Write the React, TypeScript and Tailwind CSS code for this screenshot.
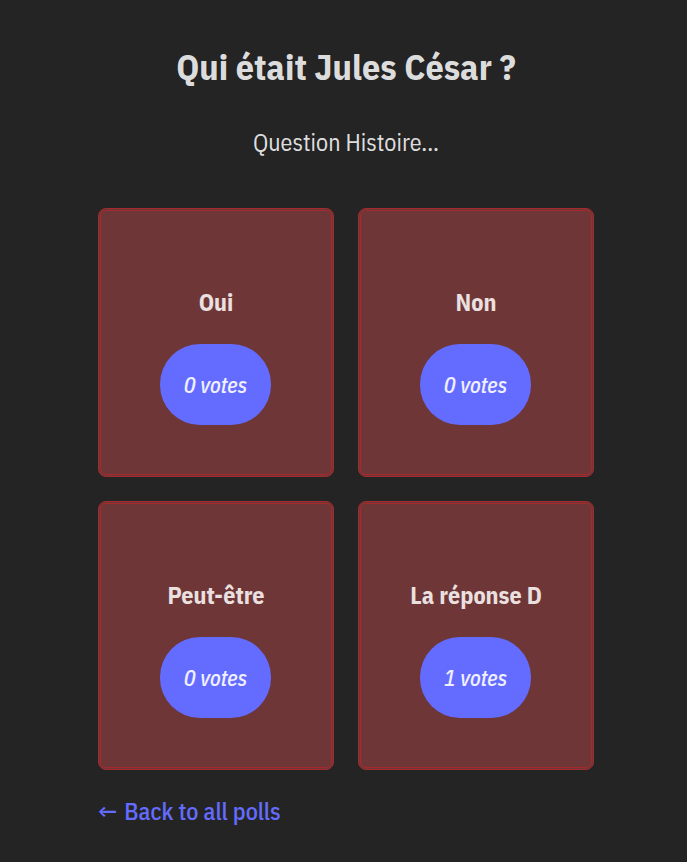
const options = [
  { label: 'Oui', votes: 0 },
  { label: 'Non', votes: 0 },
  { label: 'Peut-être', votes: 0 },
  { label: 'La réponse D', votes: 1 },
];

function OptionCard({ label, votes }: { label: string; votes: number }) {
  return (
    <div className="h-[269px] flex flex-col items-center pt-[73px] bg-[#6e3636] border-[3px] border-double border-[#a32b2e] rounded-lg">
      <h2 className="text-[24px] leading-[36px] font-bold text-[#ebe0e0]">{label}</h2>
      <button className="mt-6 -ml-[1px] w-[111px] h-[81px] rounded-[40px] bg-[#646cff] text-[22px] italic font-medium text-white/90">
        {votes} votes
      </button>
    </div>
  );
}

export default function App() {
  return (
    <div
      className="min-h-screen bg-[#242424] text-white/[0.87] flex flex-col items-center pl-[5px] pt-[47px]"
      style={{ fontFamily: '"IBM Plex Sans Condensed", Roboto, sans-serif' }}
    >
      <h1 className="text-[36px] leading-[40px] font-bold">Qui était Jules César ?</h1>
      <p className="mt-[37px] text-[24px] leading-[36px]">Question Histoire...</p>
      <div className="w-[496px] mt-[48px]">
        <div className="grid grid-cols-2 gap-6">
          {options.map((o) => (
            <OptionCard key={o.label} label={o.label} votes={o.votes} />
          ))}
        </div>
        <a href="#" className="block mt-[23px] text-[24px] leading-[36px] font-medium text-[#646cff]">
          <span className="mr-[2px]">←</span> Back to all polls
        </a>
      </div>
    </div>
  );
}
